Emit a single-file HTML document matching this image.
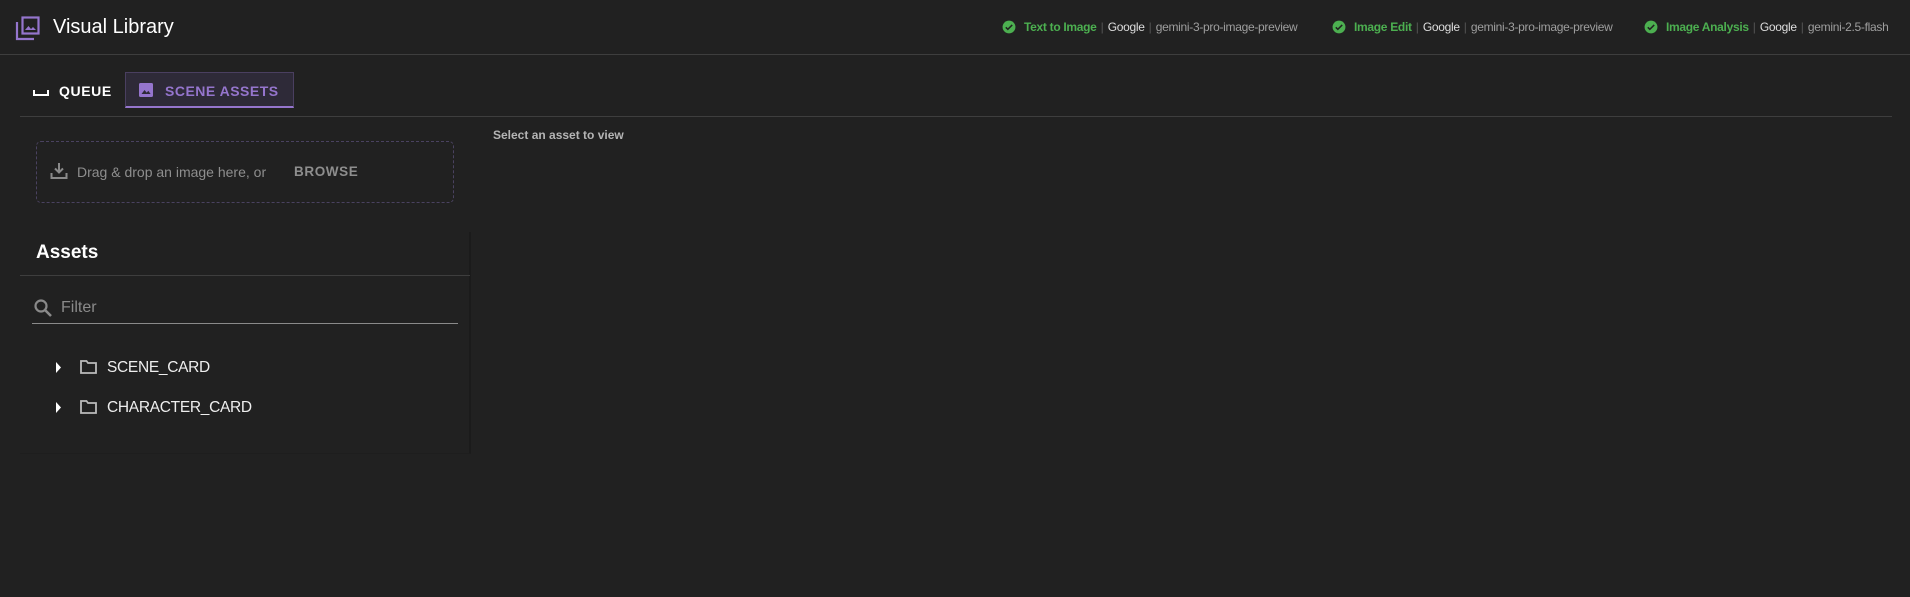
<!DOCTYPE html>
<html><head><meta charset="utf-8"><style>
*{margin:0;padding:0;box-sizing:border-box}
body{width:1910px;height:597px;background:#212121;font-family:"Liberation Sans",sans-serif;color:#fff;position:relative;overflow:hidden}
.a{position:absolute;white-space:nowrap}
.hdr{left:0;top:0;width:1910px;height:55px;border-bottom:1px solid #3e3e3e}
.st{top:20px;font-size:12px;line-height:14px;display:flex;align-items:center}
.st .g{color:#4caf50;font-weight:bold;letter-spacing:-0.3px}
.st .sep{color:#555;margin:0 4px}
.st .w{color:#ddd;letter-spacing:-0.3px}
.st .m{color:#9e9e9e;letter-spacing:-0.3px}
</style></head><body>
<div class="a hdr"></div>
<svg class="a" style="left:15px;top:15px" width="26" height="26" viewBox="0 0 26 26"><path d="M2 7v17h17" stroke="#9575cd" stroke-width="2.2" fill="none"/><rect x="7.5" y="2.5" width="16" height="16" stroke="#9575cd" stroke-width="2.2" fill="none"/><path d="M10 15l3.5-4 2.5 3 2-2 3 3z" fill="#9575cd"/></svg>
<div class="a" style="left:53px;top:15px;font-size:20px;line-height:24px">Visual Library</div>

<div class="a st" style="left:1002px"><svg width="14" height="14" viewBox="0 0 24 24"><circle cx="12" cy="12" r="11" fill="#4caf50"/><path d="M6.5 12.5l3.5 3.5 7.5-7.5" stroke="#212121" stroke-width="2.6" fill="none"/></svg><span class="g" style="margin-left:8px">Text to Image</span><span class="sep">|</span><span class="w">Google</span><span class="sep">|</span><span class="m">gemini-3-pro-image-preview</span></div>
<div class="a st" style="left:1332px"><svg width="14" height="14" viewBox="0 0 24 24"><circle cx="12" cy="12" r="11" fill="#4caf50"/><path d="M6.5 12.5l3.5 3.5 7.5-7.5" stroke="#212121" stroke-width="2.6" fill="none"/></svg><span class="g" style="margin-left:8px">Image Edit</span><span class="sep">|</span><span class="w">Google</span><span class="sep">|</span><span class="m">gemini-3-pro-image-preview</span></div>
<div class="a st" style="left:1644px"><svg width="14" height="14" viewBox="0 0 24 24"><circle cx="12" cy="12" r="11" fill="#4caf50"/><path d="M6.5 12.5l3.5 3.5 7.5-7.5" stroke="#212121" stroke-width="2.6" fill="none"/></svg><span class="g" style="margin-left:8px">Image Analysis</span><span class="sep">|</span><span class="w">Google</span><span class="sep">|</span><span class="m">gemini-2.5-flash</span></div>

<svg class="a" style="left:33px;top:85px" width="16" height="12" viewBox="0 0 16 12"><path d="M1 5v5h14V5" stroke="#fff" stroke-width="2" fill="none"/></svg>
<div class="a" style="left:59px;top:83px;font-size:14px;font-weight:bold;letter-spacing:0.6px">QUEUE</div>
<div class="a" style="left:125px;top:72px;width:169px;height:36px;background:#2e2a38;border:1px solid #4a3f60;border-bottom:2px solid #9575cd"></div>
<svg class="a" style="left:139px;top:83px" width="14" height="14" viewBox="0 0 14 14"><rect width="14" height="14" rx="1.5" fill="#9575cd"/><path d="M2.5 11l3-4 2.2 2.6 1.6-1.8 2.3 3.2z" fill="#2e2a38"/></svg>
<div class="a" style="left:165px;top:83px;font-size:14px;font-weight:bold;letter-spacing:0.5px;color:#9575cd">SCENE ASSETS</div>
<div class="a" style="left:20px;top:116px;width:1872px;height:1px;background:#3e3e3e"></div>

<div class="a" style="left:36px;top:141px;width:418px;height:62px;border:1px dashed #4a4260;border-radius:5px"></div>
<svg class="a" style="left:50px;top:162px" width="18" height="18" viewBox="0 0 18 18"><path d="M9 1v9M5 6.5l4 4 4-4M1.5 11v5h15v-5" stroke="#8a8a8a" stroke-width="2" fill="none"/></svg>
<div class="a" style="left:77px;top:164px;font-size:14px;color:#8e8e8e">Drag &amp; drop an image here, or</div>
<div class="a" style="left:294px;top:164px;font-size:13.5px;font-weight:bold;letter-spacing:0.6px;color:#8e8e8e">BROWSE</div>

<div class="a" style="left:493px;top:128px;font-size:12px;font-weight:bold;color:#b5b5b5">Select an asset to view</div>

<div class="a" style="left:20px;top:232px;width:451px;height:222px;border-right:2px solid #1b1b1b;border-bottom:1px solid #1e1e1e"></div>
<div class="a" style="left:36px;top:242px;font-size:19px;font-weight:bold">Assets</div>
<div class="a" style="left:20px;top:275px;width:450px;height:1px;background:#3e3e3e"></div>
<svg class="a" style="left:33px;top:298px" width="20" height="20" viewBox="0 0 20 20"><circle cx="8" cy="8" r="5.5" stroke="#8a8a8a" stroke-width="2.2" fill="none"/><path d="M12 12l6 6" stroke="#8a8a8a" stroke-width="2.6"/></svg>
<div class="a" style="left:61px;top:299px;font-size:16px;color:#8a8a8a">Filter</div>
<div class="a" style="left:32px;top:323px;width:426px;height:1px;background:#8a8a8a"></div>

<svg class="a" style="left:55px;top:362px" width="8" height="11" viewBox="0 0 8 11"><path d="M1 0l5 5.5L1 11z" fill="#fff"/></svg>
<svg class="a" style="left:80px;top:360px" width="17" height="14" viewBox="0 0 17 14"><path d="M1 1h5.5l1.5 2h8v10H1z" stroke="#bbb" stroke-width="1.8" fill="none"/></svg>
<div class="a" style="left:107px;top:359px;font-size:15.5px;color:#eee;letter-spacing:-0.3px">SCENE_CARD</div>
<svg class="a" style="left:55px;top:402px" width="8" height="11" viewBox="0 0 8 11"><path d="M1 0l5 5.5L1 11z" fill="#fff"/></svg>
<svg class="a" style="left:80px;top:400px" width="17" height="14" viewBox="0 0 17 14"><path d="M1 1h5.5l1.5 2h8v10H1z" stroke="#bbb" stroke-width="1.8" fill="none"/></svg>
<div class="a" style="left:107px;top:399px;font-size:15.5px;color:#eee;letter-spacing:-0.3px">CHARACTER_CARD</div>
</body></html>
